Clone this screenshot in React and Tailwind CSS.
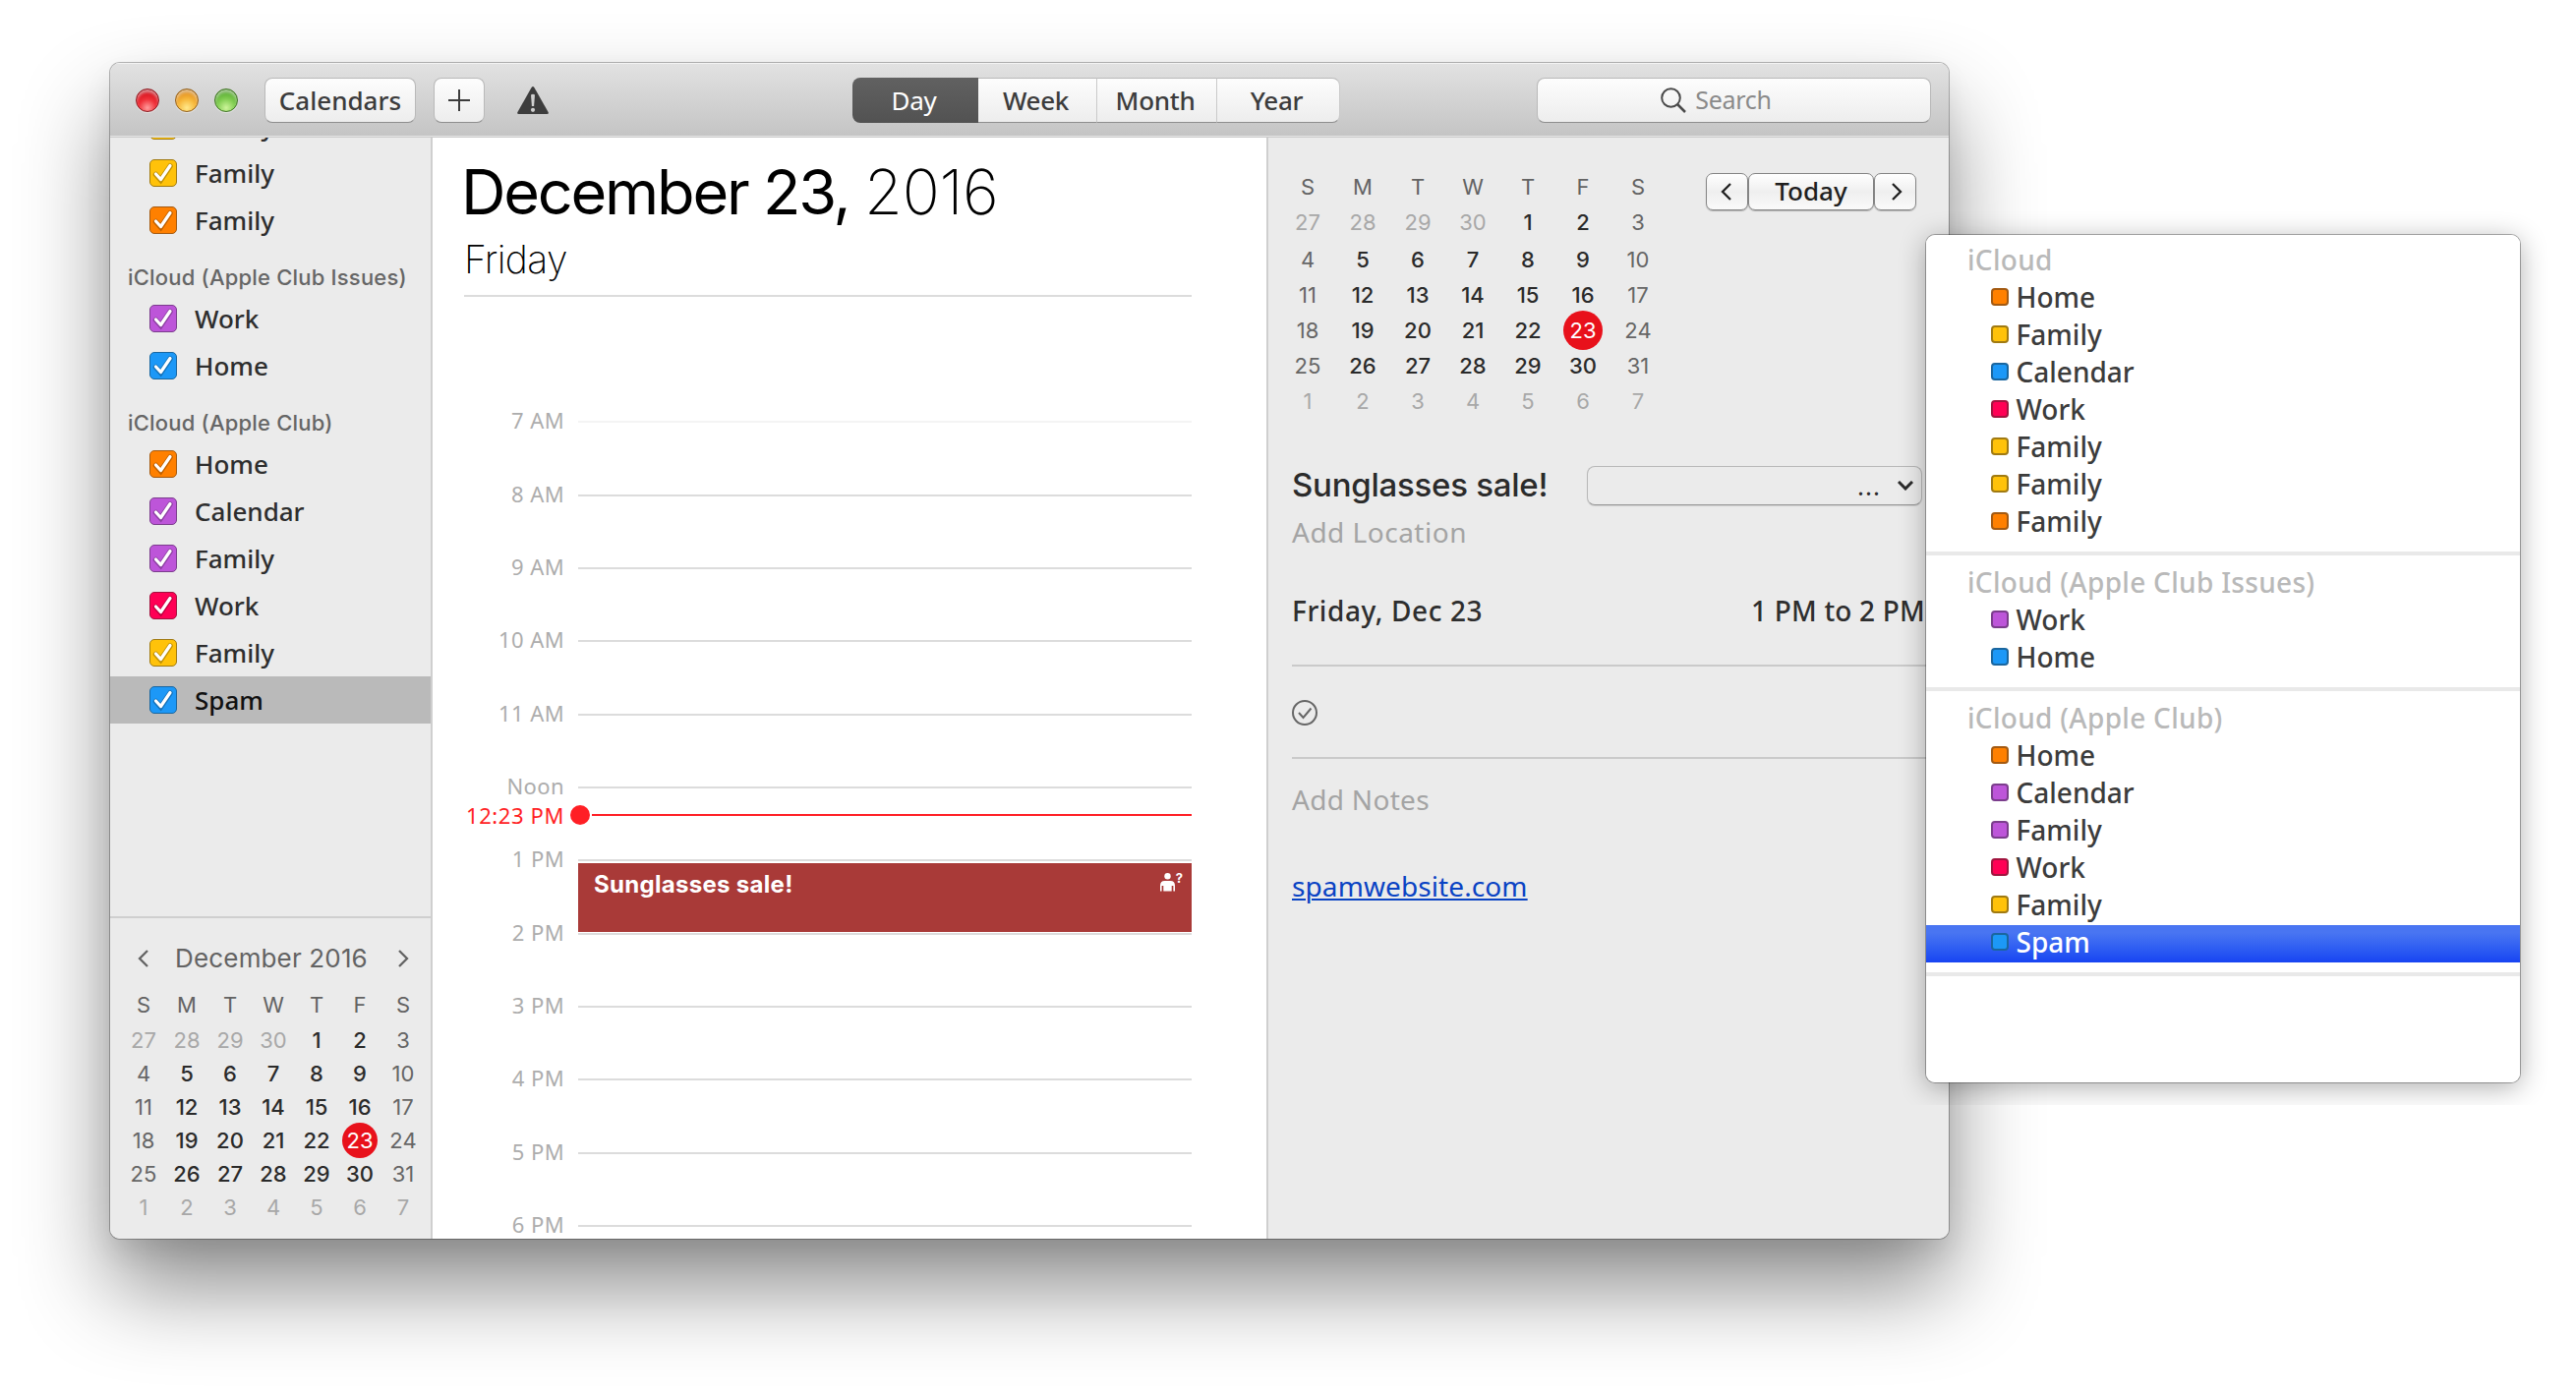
import { Fragment, useState } from "react";

const swatches = {
  orange: "bg-[#ff8000] border-[#a35a12]",
  yellow: "bg-[#ffc20a] border-[#a07a12]",
  blue: "bg-[#1c98f7] border-[#1a669f]",
  red: "bg-[#ff0055] border-[#a0153f]",
  purple: "bg-[#bd55d9] border-[#7b3d8c]",
};

const sidebarGroups = [
  {
    title: "",
    items: [
      { name: "Family", color: "yellow" },
      { name: "Family", color: "yellow" },
      { name: "Family", color: "orange" },
    ],
  },
  {
    title: "iCloud (Apple Club Issues)",
    items: [
      { name: "Work", color: "purple" },
      { name: "Home", color: "blue" },
    ],
  },
  {
    title: "iCloud (Apple Club)",
    items: [
      { name: "Home", color: "orange" },
      { name: "Calendar", color: "purple" },
      { name: "Family", color: "purple" },
      { name: "Work", color: "red" },
      { name: "Family", color: "yellow" },
      { name: "Spam", color: "blue" },
    ],
  },
];

const menuGroups = [
  {
    title: "iCloud",
    items: [
      { name: "Home", color: "orange" },
      { name: "Family", color: "yellow" },
      { name: "Calendar", color: "blue" },
      { name: "Work", color: "red" },
      { name: "Family", color: "yellow" },
      { name: "Family", color: "yellow" },
      { name: "Family", color: "orange" },
    ],
  },
  sidebarGroups[1],
  sidebarGroups[2],
];

const weeks = [
  [27, 28, 29, 30, 1, 2, 3],
  [4, 5, 6, 7, 8, 9, 10],
  [11, 12, 13, 14, 15, 16, 17],
  [18, 19, 20, 21, 22, 23, 24],
  [25, 26, 27, 28, 29, 30, 31],
  [1, 2, 3, 4, 5, 6, 7],
];

const hours = [
  { label: "7 AM", height: "h-[75px]", line: "bg-[#f4f4f4]" },
  { label: "8 AM", height: "h-[74px]" },
  { label: "9 AM", height: "h-[74px]" },
  { label: "10 AM", height: "h-[75px]" },
  { label: "11 AM", height: "h-[74px]" },
  { label: "Noon", height: "h-[74px]" },
  { label: "1 PM", height: "h-[75px]" },
  { label: "2 PM", height: "h-[74px]" },
  { label: "3 PM", height: "h-[74px]" },
  { label: "4 PM", height: "h-[75px]" },
  { label: "5 PM", height: "h-[74px]" },
  { label: "6 PM", height: "h-[14px]" },
];

const views = [
  { name: "Day", width: "w-[128px]" },
  { name: "Week", width: "w-[121px]" },
  { name: "Month", width: "w-[122px]" },
  { name: "Year", width: "w-[125px]" },
];

const toolbarButton =
  "flex h-[46px] items-center justify-center rounded-[8px] border border-[#b9b9b9] border-b-[#8e8e8e] bg-linear-to-b from-[#fdfdfd] to-[#ededed] text-[#3c3c3c]";

const navButton =
  "flex h-[38px] items-center justify-center rounded-[7px] border border-[#858585] bg-linear-to-b from-white via-[#efefef] to-[#fafafa] text-[#1f1f1f] shadow-[0_1px_1px_rgba(0,0,0,0.25)]";

function Chevron({ direction, className }) {
  return (
    <svg
      viewBox="0 0 11 18"
      fill="none"
      stroke="currentColor"
      strokeWidth="2.300"
      className={className}
    >
      <path d={direction === "left" ? "M10 1 2 9l8 8" : "M1 1l8 8-8 8"} />
    </svg>
  );
}

function TrafficLights() {
  return (
    <div className="flex gap-4">
      <span className="h-6 w-6 rounded-full border border-[#8d1a20] bg-[radial-gradient(circle_at_50%_85%,#ff9c9c_0%,#f0323a_40%,#dc1823_65%,#8f0d15_100%)] shadow-[0_1px_0_rgba(255,255,255,0.5),inset_0_3px_3px_rgba(255,255,255,0.5)]" />
      <span className="h-6 w-6 rounded-full border border-[#94601a] bg-[radial-gradient(circle_at_50%_85%,#ffe98c_0%,#f7b93d_40%,#e89a26_65%,#9c5a0c_100%)] shadow-[0_1px_0_rgba(255,255,255,0.5),inset_0_3px_3px_rgba(255,255,255,0.5)]" />
      <span className="h-6 w-6 rounded-full border border-[#3f7523] bg-[radial-gradient(circle_at_50%_85%,#cdf59a_0%,#85cf55_40%,#63b53a_65%,#356d1a_100%)] shadow-[0_1px_0_rgba(255,255,255,0.5),inset_0_3px_3px_rgba(255,255,255,0.5)]" />
    </div>
  );
}

function Toolbar({ view, onViewChange }) {
  return (
    <header className="flex h-[76px] shrink-0 items-start border-b border-[#cbcbcb] bg-linear-to-b from-[#e2e2e2] to-[#c4c4c4] pt-[15px] pl-[26px] text-[26px] shadow-[inset_0_1px_0_#f4f4f4,inset_0_-1px_0_#e4e4e4]">
      <div className="flex h-[45px] items-center">
        <TrafficLights />
      </div>

      <button type="button" className={`${toolbarButton} ml-[27px] w-[154px]`}>
        <span className="font-medium">Calendars</span>
      </button>
      <button
        type="button"
        aria-label="Add event"
        className={`${toolbarButton} ml-[18px] w-[52px]`}
      >
        <svg viewBox="0 0 22 22" className="h-[22px] w-[22px]">
          <path d="M10 0h2v10h10v2H12v10h-2V12H0v-2h10z" fill="currentColor" />
        </svg>
      </button>

      <div className="ml-[32px] flex h-[46px] items-center">
        <svg viewBox="0 0 34 28" className="h-[28px] w-[34px]">
          <path
            d="M15.600.9Q17-.9 18.400.9L32.700 26.200Q33.200 28 31.500 28H2.500Q.8 28 1.300 26.200Z"
            fill="#3d3d3d"
          />
          <path d="M15 8.500q2-1.500 4 0l-.9 11.500h-2.200z" fill="#d0d0d0" />
          <circle cx="17" cy="23.800" r="2.100" fill="#d0d0d0" />
        </svg>
      </div>

      <div className="ml-[308px] flex tracking-[-0.3px]">
        {views.map((item, index) => {
          const active = item.name === view;

          return (
            <button
              key={item.name}
              type="button"
              onClick={() => onViewChange(item.name)}
              className={`flex h-[46px] items-center justify-center pr-[3px] ${item.width} ${
                active
                  ? "bg-linear-to-b from-[#616161] to-[#525252] text-white"
                  : "border-y border-r border-t-[#b9b9b9] border-r-[#cacaca] border-b-[#8e8e8e] bg-linear-to-b from-[#fdfdfd] to-[#ededed] font-medium text-[#3c3c3c]"
              } ${index === 0 ? "rounded-l-[8px]" : ""} ${
                index === views.length - 1 ? "rounded-r-[8px]" : ""
              }`}
            >
              {item.name}
            </button>
          );
        })}
      </div>

      <div className={`${toolbarButton} ml-[200px] w-[401px] gap-[9px] pr-[36px]`}>
        <svg
          viewBox="0 0 26 26"
          fill="none"
          stroke="#4a4a4a"
          strokeWidth="2"
          className="h-[26px] w-[26px]"
        >
          <circle cx="10.500" cy="10.500" r="9.300" />
          <path d="M17 17l8 8" strokeWidth="2.500" />
        </svg>
        <span className="text-[25px] tracking-[-0.3px] text-[#8a8a8a]">Search</span>
      </div>
    </header>
  );
}

function CalendarRow({ item, selected }) {
  return (
    <li
      className={`flex h-[48px] shrink-0 items-center gap-[18px] pl-[40px] text-[26px] font-medium ${
        selected ? "bg-[#bababa] text-[#111]" : "text-[#2e2e2e]"
      }`}
    >
      <span
        className={`flex h-[28px] w-[28px] items-center justify-center rounded-[5px] border ${swatches[item.color]}`}
      >
        <svg viewBox="0 0 28 28" fill="none" className="h-[28px] w-[28px] shrink-0">
          <path
            d="M6.500 15.500l5 5.500L21 7"
            stroke="#000"
            strokeOpacity="0.25"
            strokeWidth="5.500"
            strokeLinecap="round"
          />
          <path
            d="M6.500 15l5 5.500L21 6.500"
            stroke="#fff"
            strokeWidth="3.200"
            strokeLinecap="round"
            strokeLinejoin="round"
          />
        </svg>
      </span>
      {item.name}
    </li>
  );
}

function MonthGrid({ columns, todaySize, firstWeek, lead }) {
  return (
    <div className="font-[Inter,sans-serif] text-[22px]">
      <div className={`grid h-[36px] items-center text-center text-[#636363] ${columns}`}>
        {["S", "M", "T", "W", "T", "F", "S"].map((day, index) => (
          <span key={index}>{day}</span>
        ))}
      </div>
      {weeks.map((week, weekIndex) => (
        <div
          key={weekIndex}
          className={`grid content-center items-center justify-items-center ${columns} ${lead} ${
            weekIndex === 0 ? firstWeek : ""
          }`}
        >
          {week.map((day, dayIndex) => {
            const outside =
              (weekIndex === 0 && day > 20) || weekIndex === weeks.length - 1;
            const weekend = dayIndex === 0 || dayIndex === 6;
            const today = weekIndex === 3 && day === 23;

            if (today) {
              return (
                <span
                  key={dayIndex}
                  className={`flex items-center justify-center rounded-full bg-[#e8111b] text-white ${todaySize}`}
                >
                  {day}
                </span>
              );
            }

            return (
              <span
                key={dayIndex}
                className={
                  outside
                    ? "text-[#a8a8a8]"
                    : weekend
                      ? "text-[#666]"
                      : "font-medium text-[#2a2a2a]"
                }
              >
                {day}
              </span>
            );
          })}
        </div>
      ))}
    </div>
  );
}

function Sidebar() {
  return (
    <aside className="flex w-[328px] shrink-0 flex-col border-r-2 border-[#cfcfcf] bg-[#ebebeb]">
      <div className="flex h-[792px] flex-col overflow-hidden">
        {/* list is scrolled down, so the first row is partly hidden */}
        <div className="-mt-[36px]">
          {sidebarGroups.map((group, index) => (
            <section key={index}>
              {group.title && (
                <h2 className="flex h-[52px] items-center pt-4 pl-[18px] font-[Inter,sans-serif] text-[22px] font-medium tracking-[0.2px] whitespace-nowrap text-[#666]">
                  {group.title}
                </h2>
              )}
              <ul>
                {group.items.map((item, itemIndex) => (
                  <CalendarRow
                    key={itemIndex}
                    item={item}
                    selected={item.name === "Spam"}
                  />
                ))}
              </ul>
            </section>
          ))}
        </div>
      </div>

      <div className="flex-1 border-t-2 border-[#cfcfcf] pt-[20px] pl-[12px]">
        <div className="mb-[9px] flex h-[41px] items-center justify-between pr-[22px] pl-[16px] text-[#636363]">
          <Chevron direction="left" className="h-[18px] w-[11px]" />
          <span className="mr-[4px] font-[Inter,sans-serif] text-[26px] tracking-[0.15px]">
            December 2016
          </span>
          <Chevron direction="right" className="h-[18px] w-[11px]" />
        </div>
        <MonthGrid
          columns="grid-cols-[repeat(7,44px)]"
          lead="h-[34px]"
          firstWeek="mt-px"
          todaySize="h-[36px] w-[36px]"
        />
      </div>
    </aside>
  );
}

function AttendeeIcon() {
  return (
    <span className="flex items-start gap-px text-white">
      <svg viewBox="0 0 15 19" className="h-[19px] w-[15px]" fill="currentColor">
        <circle cx="7.500" cy="3.200" r="3.200" />
        <path d="M0 18.500V13Q0 8 4.500 8h6Q15 8 15 13v5.500h-1.600V13h-1.700v5.500H3.300V13H1.600v5.500z" />
      </svg>
      <span className="font-[Inter,sans-serif] text-[13px] leading-[11px] font-bold">?</span>
    </span>
  );
}

function DayView() {
  return (
    <main className="w-[848px] shrink-0 overflow-hidden bg-white pl-[32px] text-black">
      <div className="font-[Inter,sans-serif]">
        <h1 className="mt-[15px] -ml-[3px] h-[80px] text-[63px] leading-[80px] tracking-[-2.2px] whitespace-nowrap">
          December 23,{" "}
          <span className="font-extralight tracking-[-0.3px]">2016</span>
        </h1>
        <p className="mt-[5px] h-[48px] text-[39px] leading-[48px] font-extralight tracking-[-0.6px]">
          Friday
        </p>
      </div>
      <div className="mt-[12px] h-[2px] w-[740px] bg-[#dcdcdc]" />

      <div className="relative mt-[126px] w-[740px]">
        {hours.map((hour) => (
          <div key={hour.label} className={`flex items-start ${hour.height}`}>
            <span className="-mt-px mr-[14px] w-[102px] text-right text-[22px] leading-[0px] tracking-[0.4px] text-[#adadad]">
              {hour.label}
            </span>
            <span className={`h-[2px] flex-1 ${hour.line ?? "bg-[#dcdcdc]"}`} />
          </div>
        ))}

        <div className="absolute top-[391px] left-0 flex h-[20px] w-[740px] items-center">
          <span className="w-[102px] text-right text-[22px] leading-none tracking-[0.6px] whitespace-nowrap text-[#ff1f25]">
            12:23 PM
          </span>
          <span className="mr-[2px] ml-[6px] h-[20px] w-[20px] rounded-full bg-[#ff1f25]" />
          <span className="h-[2px] flex-1 bg-[#ff1f25]" />
        </div>

        <div className="absolute top-[450px] left-[116px] flex h-[70px] w-[624px] justify-between bg-[#a93a38] pt-[10px] pr-[9px] pl-[16px]">
          <span className="font-[Inter,sans-serif] text-[24px] leading-[24px] font-bold tracking-[0.3px] text-white">
            Sunglasses sale!
          </span>
          <AttendeeIcon />
        </div>
      </div>
    </main>
  );
}

function EventPanel() {
  return (
    <aside className="flex-1 border-l-2 border-[#cfcfcf] bg-[#ebebeb] pt-[32px]">
      <div className="flex pl-[12px]">
        <MonthGrid
          columns="grid-cols-[repeat(7,56px)]"
          lead="h-[36px]"
          firstWeek="mb-[2px]"
          todaySize="h-[40px] w-[40px]"
        />
        <div className="mt-[4px] ml-[41px] flex">
          <button
            type="button"
            aria-label="Previous day"
            className={`${navButton} w-[43px] pr-[3px]`}
          >
            <Chevron direction="left" className="h-[18px] w-[11px]" />
          </button>
          <button
            type="button"
            className={`${navButton} w-[128px] pb-[2px] text-[26px] font-medium`}
          >
            Today
          </button>
          <button
            type="button"
            aria-label="Next day"
            className={`${navButton} w-[43px] pl-[3px]`}
          >
            <Chevron direction="right" className="h-[18px] w-[11px]" />
          </button>
        </div>
      </div>

      <div className="mt-[48px] pl-[24px] text-[28px]">
        <div className="flex h-[40px] items-center">
          <h2 className="w-[300px] font-[Inter,sans-serif] text-[33px] font-medium tracking-[-0.25px] whitespace-nowrap text-[#2b2b2b]">
            Sunglasses sale!
          </h2>
          <div className="flex h-[40px] w-[341px] items-center justify-end rounded-[8px] border border-[#b8b8b8] border-b-[#969696] pr-[8px] text-[#2b2b2b] shadow-[0_1px_1px_rgba(0,0,0,0.12)]">
            <span className="mr-[17px] text-[26px] leading-none tracking-[1px]">...</span>
            <svg
              viewBox="0 0 16 10"
              fill="none"
              stroke="currentColor"
              strokeWidth="3"
              className="h-[10px] w-[16px]"
            >
              <path d="M1 1l7 7 7-7" />
            </svg>
          </div>
        </div>
        <p className="mt-[7px] h-[40px] leading-[40px] tracking-[0.5px] text-[#a4a4a4]">
          Add Location
        </p>

        <div className="mt-[40px] flex h-[40px] items-center justify-between pr-[24px] font-medium text-[#2e2e2e]">
          <span className="tracking-[0.6px]">Friday, Dec 23</span>
          <span className="tracking-[0.2px]">1 PM to 2 PM</span>
        </div>
        <div className="mt-[35px] h-[2px] bg-[#cacaca]" />
        <svg
          viewBox="0 0 26 26"
          fill="none"
          stroke="#666"
          strokeWidth="2"
          className="mt-[34px] h-[26px] w-[26px]"
        >
          <circle cx="13" cy="13" r="12" />
          <path d="M7 13l4.500 5L19.500 8.500" />
        </svg>
        <div className="mt-[32px] h-[2px] bg-[#cacaca]" />
        <p className="mt-[21px] h-[40px] leading-[40px] tracking-[0.3px] text-[#a4a4a4]">
          Add Notes
        </p>
        <a
          href="#spam"
          className="mt-[48px] block h-[40px] leading-[40px] tracking-[0.1px] text-[#0a43c4] underline decoration-2 underline-offset-2"
        >
          spamwebsite.com
        </a>
      </div>
    </aside>
  );
}

function CalendarMenu() {
  const [selected, setSelected] = useState("2-5");

  return (
    <div className="absolute top-[239px] left-[1959px] h-[862px] w-[604px] overflow-hidden rounded-[9px] bg-white pt-[8px] text-[28px] font-medium">
      {menuGroups.map((group, groupIndex) => (
        <Fragment key={groupIndex}>
          <p className="h-[38px] pl-[42px] leading-[34px] tracking-[0.3px] text-[#b9b9b9]">
            {group.title}
          </p>
          {group.items.map((item, itemIndex) => {
            const id = `${groupIndex}-${itemIndex}`;

            return (
              <button
                key={id}
                type="button"
                onClick={() => setSelected(id)}
                className={`flex h-[38px] w-full items-start pl-[66px] leading-[34px] ${
                  selected === id
                    ? "bg-linear-to-b from-[#4975f2] from-20% to-[#1843f2] text-white"
                    : "text-[#3c3c3c]"
                }`}
              >
                <span
                  className={`mt-[8px] mr-[7.5px] h-[18px] w-[18px] rounded-[4px] border-2 ${swatches[item.color]}`}
                />
                {item.name}
              </button>
            );
          })}
          <div className="my-[10px] h-[4px] bg-[#e9e9e9]" />
        </Fragment>
      ))}
    </div>
  );
}

export default function App() {
  const [view, setView] = useState("Day");

  return (
    <div className="relative h-[1420px] w-[2620px] overflow-hidden bg-white pt-[64px] pl-[112px] font-['Noto_Sans',sans-serif]">
      <div className="flex h-[1196px] w-[1870px] rounded-[10px] shadow-[0_0_0_1px_rgba(0,0,0,0.28),0_50px_90px_rgba(0,0,0,0.45),0_14px_28px_rgba(0,0,0,0.08)]">
        <div className="flex flex-1 flex-col overflow-hidden rounded-[10px]">
          <Toolbar view={view} onViewChange={setView} />
          <div className="flex flex-1 overflow-hidden">
            <Sidebar />
            <DayView />
            <EventPanel />
          </div>
        </div>
      </div>

      {/* the menu's shadow stops short below its bottom edge */}
      <div className="absolute top-[239px] left-[1959px] h-[862px] w-[604px] rounded-[9px] shadow-[0_0_0_1px_rgba(0,0,0,0.3),0_5px_28px_rgba(0,0,0,0.32)] [clip-path:inset(-60px_-60px_-23px_-60px)]" />
      <CalendarMenu />
    </div>
  );
}
